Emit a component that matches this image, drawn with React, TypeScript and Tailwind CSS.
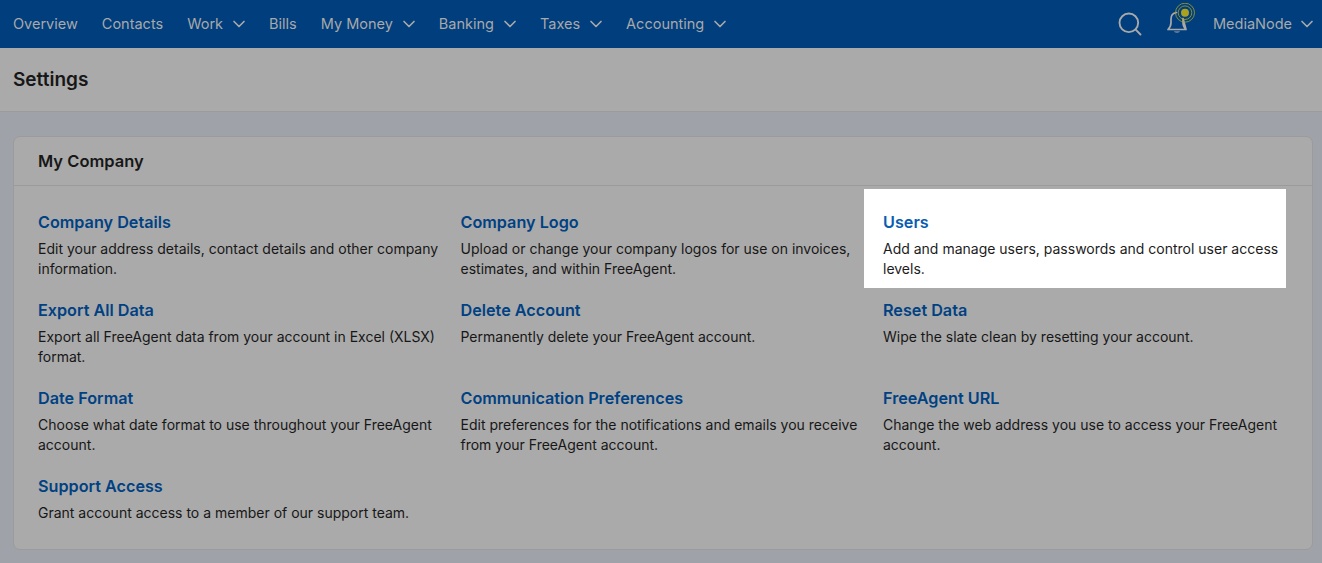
import { ChevronDown, Search } from "lucide-react";

const navItems = [
  { label: "Overview" },
  { label: "Contacts" },
  { label: "Work", menu: true },
  { label: "Bills" },
  { label: "My Money", menu: true },
  { label: "Banking", menu: true },
  { label: "Taxes", menu: true },
  { label: "Accounting", menu: true },
];

const settings = [
  { title: "Company Details", text: "Edit your address details, contact details and other company information." },
  { title: "Company Logo", text: "Upload or change your company logos for use on invoices, estimates, and within FreeAgent." },
  { title: "Users", text: "Add and manage users, passwords and control user access levels.", active: true },
  { title: "Export All Data", text: "Export all FreeAgent data from your account in Excel (XLSX) format." },
  { title: "Delete Account", text: "Permanently delete your FreeAgent account." },
  { title: "Reset Data", text: "Wipe the slate clean by resetting your account." },
  { title: "Date Format", text: "Choose what date format to use throughout your FreeAgent account." },
  { title: "Communication Preferences", text: "Edit preferences for the notifications and emails you receive from your FreeAgent account." },
  { title: "FreeAgent URL", text: "Change the web address you use to access your FreeAgent account." },
  { title: "Support Access", text: "Grant account access to a member of our support team." },
];

const BellIcon = () => (
  <svg width="32" height="36" viewBox="0 0 32 36" fill="none">
    <path
      d="M3 26.500c2-2 3-3.700 3-7v-3.500c0-3.800 2.400-6 5.500-6.500 M18 15.500v4c0 3.300 1 5 3 7z M3 26.500h18"
      stroke="#a9a9a9"
      strokeWidth="1.700"
      strokeLinejoin="round"
      strokeLinecap="round"
    />
    <path d="M9 28.500c.8 1.400 5.200 1.400 6 0z" fill="#a9a9a9" />
    <circle cx="20" cy="9.700" r="4" fill="#a8a21f" />
    <circle cx="20" cy="9.700" r="6.800" stroke="#a8a21f" strokeWidth="0.800" />
    <circle cx="20" cy="9.700" r="9.500" stroke="#a8a21f" strokeWidth="0.800" />
  </svg>
);

export default function App() {
  return (
    <div className="h-[563px] overflow-hidden bg-[#9fa2a8] font-['Inter',sans-serif] text-[14px] text-[#1c1c1c]">
      <header className="flex h-12 items-center bg-[#003e7e] pl-[13px] pr-[5px] text-[14.5px] text-[#a9a9a9]">
        <nav className="flex items-center gap-6">
          {navItems.map((item) => (
            <a key={item.label} className="flex items-center">
              {item.label}
              {item.menu && <ChevronDown size={20} strokeWidth={2} className="ml-[6px] mr-[-4px]" />}
            </a>
          ))}
        </nav>
        <div className="ml-auto flex items-center">
          <Search size={28} strokeWidth={1.6} />
          <div className="ml-[21px] mt-[-6px] flex">
            <BellIcon />
          </div>
          <span className="ml-4">MediaNode</span>
          <ChevronDown size={20} strokeWidth={2} className="ml-[5px]" />
        </div>
      </header>

      <div className="flex h-[64px] items-center border-b border-[#9b9b9b] bg-[#aaaaaa] pl-[13px] pt-[2px]">
        <h1 className="text-[19px] font-semibold text-[#171717]">Settings</h1>
      </div>

      <section className="ml-[13px] mr-[9px] mt-6 h-[414px] rounded-[7px] border border-[#9b9b9b] bg-[#aaaaaa]">
        <h2 className="flex h-[49px] items-center border-b border-[#9b9b9b] pl-6 text-[16.500px] font-semibold text-[#171717]">
          My Company
        </h2>
        <div className="grid grid-cols-[422.500px_422.500px_422.500px] auto-rows-[88px] pl-6 pt-[22px]">
          {settings.map((item) => (
            <div key={item.title} className={item.active ? "relative" : ""}>
              {item.active && <div className="absolute left-[-19px] top-[-19px] h-[99px] w-[422px] bg-white" />}
              <div className="relative pr-3">
                <h3 className={`text-[16.200px] font-semibold leading-[28px] ${item.active ? "text-[#0a5cb0]" : "text-[#004183]"}`}>
                  {item.title}
                </h3>
                <p className={`mt-[3px] leading-5 ${item.active ? "text-[#1c1c1c]" : "text-[#171717]"}`}>{item.text}</p>
              </div>
            </div>
          ))}
        </div>
      </section>
    </div>
  );
}
